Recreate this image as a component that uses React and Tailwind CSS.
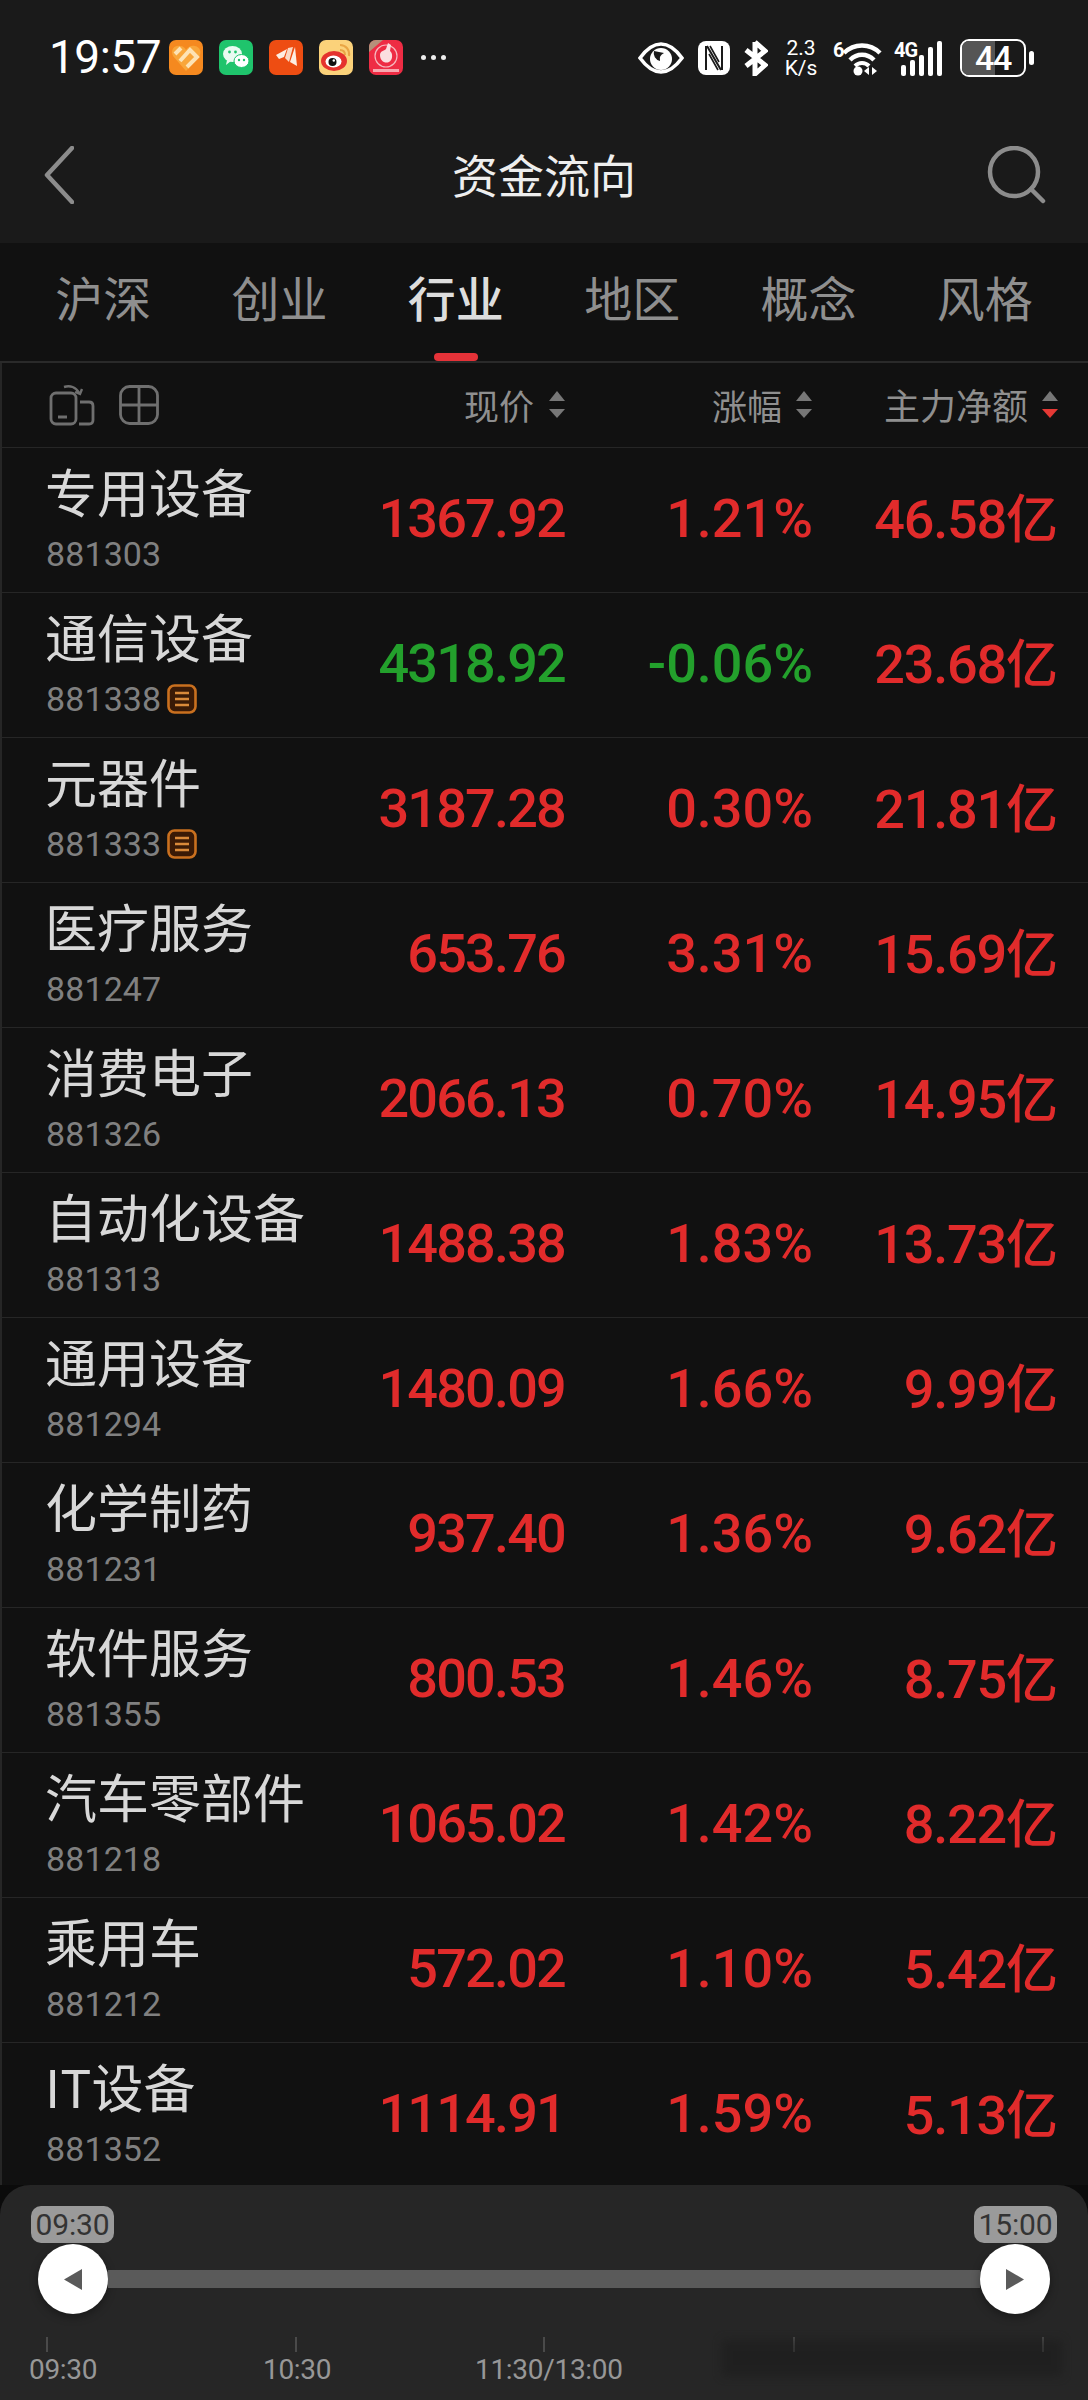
import React from "react";

const CJK = '"Noto Sans CJK SC", "Noto Sans", sans-serif';

const rows = [
  ["专用设备", "881303", "1367.92", "1.21%", "46.58亿"],
  ["通信设备", "881338", "4318.92", "-0.06%", "23.68亿", true],
  ["元器件", "881333", "3187.28", "0.30%", "21.81亿", true],
  ["医疗服务", "881247", "653.76", "3.31%", "15.69亿"],
  ["消费电子", "881326", "2066.13", "0.70%", "14.95亿"],
  ["自动化设备", "881313", "1488.38", "1.83%", "13.73亿"],
  ["通用设备", "881294", "1480.09", "1.66%", "9.99亿"],
  ["化学制药", "881231", "937.40", "1.36%", "9.62亿"],
  ["软件服务", "881355", "800.53", "1.46%", "8.75亿"],
  ["汽车零部件", "881218", "1065.02", "1.42%", "8.22亿"],
  ["乘用车", "881212", "572.02", "1.10%", "5.42亿"],
  ["IT设备", "881352", "1114.91", "1.59%", "5.13亿"],
];

function AppIcons() {
  return (
    <div className="flex items-center gap-[16px] ml-[8px]">
      <svg width="34" height="35" viewBox="0 0 34 35">
        <rect width="34" height="35" rx="7" fill="#f5891f" />
        <path d="M17 31 L4 16 C1 9 6 5 11 6 C14 6 16 8 17 10 C19 7 22 5 26 6 C31 7 33 12 30 17 Z" fill="#f9a63a" />
        <path d="M6 14 L12 8 M11 21 L21 10 L28 17 L18 27" fill="none" stroke="#fde3b5" strokeWidth="4" />
      </svg>
      <svg width="34" height="35" viewBox="0 0 34 35">
        <rect width="34" height="35" rx="7" fill="#1fc46c" />
        <ellipse cx="13.5" cy="14" rx="9.5" ry="8" fill="#e9fbf1" />
        <path d="M8 20 L7 25 L12 21 Z" fill="#e9fbf1" />
        <ellipse cx="22.5" cy="21" rx="7.5" ry="6.5" fill="#ffffff" stroke="#1fc46c" />
        <circle cx="10.5" cy="12" r="1.4" fill="#1fc46c" />
        <circle cx="16.5" cy="12" r="1.4" fill="#1fc46c" />
        <circle cx="20" cy="20" r="1.2" fill="#1fc46c" />
        <circle cx="25" cy="20" r="1.2" fill="#1fc46c" />
      </svg>
      <svg width="34" height="35" viewBox="0 0 34 35">
        <rect width="34" height="35" rx="7" fill="#ee4d12" />
        <path d="M7 15 L18 9 L15 17 L10 19 Z" fill="#fdeee2" />
        <path d="M19 8 L24 7 L20 22 L16 18 Z" fill="#fbd9c4" />
        <path d="M26 7 L28 26 L21 22 Z" fill="#fdeee2" />
      </svg>
      <svg width="34" height="35" viewBox="0 0 34 35">
        <rect width="34" height="35" rx="7" fill="#fbd27a" />
        <path d="M21 5 C27 5 31 10 30 16 M21 10 C24 10 26 12 26 15" stroke="#e9a645" strokeWidth="2" fill="none" />
        <ellipse cx="15" cy="21" rx="13" ry="10" fill="#e5322d" />
        <ellipse cx="14.5" cy="21.5" rx="8" ry="6" fill="#fff" />
        <circle cx="13.5" cy="22" r="4" fill="#111" />
        <circle cx="14.8" cy="20.5" r="1.2" fill="#fff" />
      </svg>
      <svg width="34" height="35" viewBox="0 0 34 35">
        <rect width="34" height="35" rx="7" fill="#ee2c44" />
        <path d="M0 7 C0 3 3 0 7 0 L14 0 L0 12 Z" fill="#b5907a" />
        <circle cx="17" cy="16" r="11" fill="none" stroke="#f6b8be" strokeWidth="1.2" />
        <path d="M11 15 C11 11 15 11 17 9 L19 3 L22 5 L21 11 C24 13 24 20 20 22 C16 24 11 21 11 15 Z" fill="#fbdfe0" />
        <rect x="4" y="29" width="26" height="3" fill="#f7a8b0" />
      </svg>
      <div className="flex gap-[5px] ml-[2px]">
        <span className="w-[5px] h-[5px] rounded-full bg-[#eeeeee]" />
        <span className="w-[5px] h-[5px] rounded-full bg-[#eeeeee]" />
        <span className="w-[5px] h-[5px] rounded-full bg-[#eeeeee]" />
      </div>
    </div>
  );
}

function StatusIcons() {
  return (
    <div className="flex items-center text-white" style={{ fontFamily: "Roboto, sans-serif" }}>
      <svg width="46" height="32" viewBox="0 0 46 32" className="mr-[14px]">
        <path d="M2 16 C10 5 17 2 23 2 C29 2 36 5 44 16 C36 27 29 30 23 30 C17 30 10 27 2 16 Z" fill="none" stroke="#fff" strokeWidth="3.6" />
        <circle cx="23" cy="17" r="11" fill="#fff" />
        <path d="M16 9 A8 8 0 0 0 22 19 A7 7 0 0 1 26 11 Z" fill="#1a1a1a" />
      </svg>
      <svg width="32" height="34" viewBox="0 0 32 34" className="mr-[13px]">
        <rect width="32" height="34" rx="8" fill="#fff" />
        <path d="M8 5 V29 M24 5 V29 M9 5 L23 29" fill="none" stroke="#1a1a1a" strokeWidth="2" />
        <path d="M12 5 L21 21 M11 13 L20 29" fill="none" stroke="#1a1a1a" strokeWidth="1.6" />
      </svg>
      <svg width="25" height="36" viewBox="0 0 25 36" className="mr-[16px]">
        <path d="M12 2 L12 34 L22 25 L3 10 M12 2 L22 11 L3 26" fill="none" stroke="#fff" strokeWidth="5" />
      </svg>
      <div className="flex flex-col items-center w-[34px] mr-[15px] text-[21px] leading-[20px]">
        <span>2.3</span>
        <span>K/s</span>
      </div>
      <div className="relative w-[49px] h-[36px] mr-[12px]">
        <span className="absolute left-0 top-0 text-[20px] leading-[20px] font-bold">6</span>
        <svg width="40" height="36" viewBox="0 0 40 36" className="absolute left-[9px] top-0">
          <path d="M2 13 C12 3 28 3 38 13" fill="none" stroke="#fff" strokeWidth="4.5" />
          <path d="M8 20 C15 13 25 13 32 20" fill="none" stroke="#fff" strokeWidth="4.5" />
          <path d="M13 26 C17 22 23 22 27 26" fill="none" stroke="#fff" strokeWidth="4" />
          <circle cx="16" cy="31" r="4.5" fill="#fff" />
          <path d="M27 27 L27 35 L22 31 Z M30 27 L30 35 L35 31 Z" fill="#fff" />
        </svg>
      </div>
      <div className="relative w-[51px] h-[36px] mr-[15px]">
        <span className="absolute left-0 top-0 text-[20px] leading-[20px] font-bold tracking-[-1px]">4G</span>
        <div className="absolute left-[7px] bottom-0 flex items-end gap-[4px]">
          <span className="w-[5px] h-[11px] rounded-[2px] bg-white" />
          <span className="w-[5px] h-[16px] rounded-[2px] bg-white" />
          <span className="w-[5px] h-[21px] rounded-[2px] bg-white" />
          <span className="w-[5px] h-[29px] rounded-[2px] bg-white" />
          <span className="w-[5px] h-[35px] rounded-[2px] bg-white" />
        </div>
      </div>
      <div className="relative w-[66px] h-[38px] rounded-[9px] border-[2.5px] border-white overflow-hidden flex items-center justify-center">
        <div className="absolute left-0 top-0 bottom-0 w-[33px] bg-[#555555]" />
        <span className="relative text-[34px] font-medium leading-[32px] tracking-[-1.2px]">44</span>
      </div>
      <span className="w-[5px] h-[14px] rounded-full bg-white ml-[3px]" />
    </div>
  );
}

function Sort({ active }) {
  return (
    <svg width="16" height="28" viewBox="0 0 16 28" className="shrink-0">
      <path d="M8 0 L16 10 L0 10 Z" fill="#777777" />
      <path d="M0 18 L16 18 L8 27 Z" fill={active ? "#e53935" : "#777777"} />
    </svg>
  );
}

function TagIcon() {
  return (
    <svg width="30" height="30" viewBox="0 0 30 30" className="ml-[6px]">
      <rect x="1.5" y="1.5" width="27" height="27" rx="6" fill="#3a1a06" stroke="#c9701f" strokeWidth="2.6" />
      <path d="M8 9 H22 M8 15 H22 M8 21 H22" stroke="#d98a3a" strokeWidth="2.4" />
    </svg>
  );
}

function Row({ r, last }) {
  const [name, code, price, pct, amount, tag] = r;
  const down = pct.startsWith("-");
  const base = "text-right font-medium text-[54px] leading-none mt-[-3px] ";
  return (
    <div className={"grid shrink-0 grid-cols-[300px_220px_248px_245px] items-center h-[145px] pl-[43px] pr-[30px]" + (last ? "" : " border-b border-[#262626]")}>
      <div className="flex flex-col self-start pt-[13px]">
        <div className="text-[52px] leading-[60px] text-[#d8d8d8] whitespace-nowrap" style={{ fontFamily: CJK }}>{name}</div>
        <div className="flex items-center mt-[16px] h-[34px] ml-[1px]">
          <span className="text-[34px] leading-[34px] text-[#808080] tracking-[0.1px]" style={{ fontFamily: "Roboto, sans-serif" }}>{code}</span>
          {tag && <TagIcon />}
        </div>
      </div>
      <div className={base + "tracking-[-1.8px] " + (down ? "text-[#23a02c]" : "text-[#e12b2b]")}>{price}</div>
      <div className={base + "tracking-[0px] " + (down ? "text-[#23a02c]" : "text-[#e12b2b]")}>{pct}</div>
      <div className={base + "tracking-[-1.2px] text-[#e12b2b]"}>{amount.slice(0, -1)}<span className="text-[52px] tracking-normal" style={{ fontFamily: CJK }}>亿</span></div>
    </div>
  );
}

export default function App() {
  const tabs = ["沪深", "创业", "行业", "地区", "概念", "风格"];
  return (
    <div className="w-[1088px] h-[2400px] overflow-hidden flex flex-col bg-[#111111]" style={{ fontFamily: 'Roboto, "Noto Sans CJK SC", sans-serif' }}>
      <div className="h-[243px] bg-[#1a1a1a] shrink-0 flex flex-col">
        <div className="h-[112px] flex items-start justify-between pl-[49px] pr-[54px] pt-[38px]">
          <div className="flex items-center">
            <span className="text-[46px] leading-[38px] text-white tracking-[-0.5px]">19:57</span>
            <AppIcons />
          </div>
          <StatusIcons />
        </div>
        <div className="flex-1 flex items-start justify-between pl-[44px] pr-[41px] pt-[34px] relative">
          <svg width="30" height="58" viewBox="0 0 30 58">
            <path d="M28 2 L3 29 L28 56" fill="none" stroke="#8c8c8c" strokeWidth="4.5" strokeLinecap="round" strokeLinejoin="round" />
          </svg>
          <div className="absolute left-0 right-0 top-[34px] text-center text-[46px] leading-[54px] text-[#eeeeee]" style={{ fontFamily: CJK }}>资金流向</div>
          <svg width="60" height="58" viewBox="0 0 60 58">
            <circle cx="27" cy="26" r="24" fill="none" stroke="#8c8c8c" strokeWidth="4.5" />
            <path d="M44 43 L56 55" fill="none" stroke="#8c8c8c" strokeWidth="4.5" strokeLinecap="round" />
          </svg>
        </div>
      </div>

      <div className="h-[120px] shrink-0 px-[15px] flex border-b-2 border-[#2a2a2a]">
        {tabs.map((t, i) => (
          <div key={t} className={"relative flex-1 flex justify-center pt-[19px] text-[48px] leading-[68px] " + (i === 2 ? "text-[#dddddd] font-medium" : "text-[#8f8f8f]")} style={{ fontFamily: CJK }}>
            {t}
            {i === 2 && <span className="absolute bottom-0 left-1/2 -translate-x-1/2 w-[44px] h-[8px] rounded-full bg-[#e53238]" />}
          </div>
        ))}
      </div>

      <div className="flex-1 min-h-0 overflow-hidden border-l-2 border-[#262626] bg-[#111111] flex flex-col">
        <div className="h-[85px] shrink-0 border-b border-[#262626] flex items-center pl-[47px] pr-[30px]" style={{ fontFamily: CJK }}>
          <svg width="46" height="42" viewBox="0 0 46 42" className="mr-[24px] shrink-0">
            <rect x="2" y="9" width="25" height="31" rx="5" fill="none" stroke="#6f6f6f" strokeWidth="2.8" />
            <path d="M9 33 H18" stroke="#6f6f6f" strokeWidth="3" />
            <path d="M15 3 C21 1 27 3 30 9 M26 8 L31 10 L33 5" fill="none" stroke="#6f6f6f" strokeWidth="2.4" />
            <path d="M31 18 H40 Q44 18 44 22 V36 Q44 40 40 40 H30" fill="none" stroke="#6f6f6f" strokeWidth="2.8" />
          </svg>
          <svg width="40" height="40" viewBox="0 0 40 40" className="shrink-0">
            <rect x="1.5" y="1.5" width="37" height="37" rx="9" fill="none" stroke="#6f6f6f" strokeWidth="2.8" />
            <path d="M20 2 V38 M2 20 H38" stroke="#6f6f6f" strokeWidth="2.8" />
          </svg>
          <div className="flex-1 flex items-center justify-end gap-[15px] text-[35px] leading-none text-[#8f8f8f]">
            <span className="-mt-[2px]">现价</span><Sort />
          </div>
          <div className="w-[247px] flex items-center justify-end gap-[14px] text-[35px] leading-none text-[#8f8f8f]">
            <span className="-mt-[2px]">涨幅</span><Sort />
          </div>
          <div className="w-[246px] flex items-center justify-end gap-[14px] text-[36px] leading-none text-[#8f8f8f]">
            <span className="-mt-[2px]">主力净额</span><Sort active />
          </div>
        </div>
        {rows.map((r, i) => (
          <Row key={r[1]} r={r} last={i === rows.length - 1} />
        ))}
      </div>

      <div className="h-[215px] shrink-0 bg-[#0b0b0b]">
        <div className="relative h-full bg-[#262626] rounded-t-[30px] px-[31px] pt-[21px]">
          <div className="flex justify-between">
            <Badge>09:30</Badge>
            <Badge>15:00</Badge>
          </div>
          <div className="flex items-center pl-[7px] pr-[7px] mt-[1px]">
            <Knob dir="left" />
            <div className="flex-1 h-[18px] bg-[#5a5a5a]" />
            <Knob dir="right" />
          </div>
          <div className="relative mt-[23px] h-[15px]">
            {[15, 264, 512, 762, 1011].map((x) => (
              <span key={x} className="absolute top-0 w-[2px] h-[15px] bg-[#4a4a4a]" style={{ left: x }} />
            ))}
          </div>
          <div className="flex text-[28px] leading-[26px] text-[#979797] mt-[5px] -ml-[2px] tracking-[-0.3px]">
            <span className="w-[234px]">09:30</span>
            <span className="w-[212px]">10:30</span>
            <span>11:30/13:00</span>
          </div>
          <div className="absolute left-[722px] top-[155px] w-[340px] h-[36px] bg-[#1a1a1a] opacity-50 blur-[5px]" />
        </div>
      </div>
    </div>
  );
}

function Badge({ children }) {
  return (
    <div className="w-[83px] h-[37px] rounded-[10px] bg-[#9a9a9a] text-[#333333] text-[30px] leading-[37px] text-center tracking-[-0.1px]">{children}</div>
  );
}

function Knob({ dir }) {
  return (
    <div className="w-[70px] h-[70px] rounded-full bg-white shrink-0 flex items-center justify-center shadow-[0_3px_8px_rgba(0,0,0,0.35)]">
      <svg width="18" height="21" viewBox="0 0 18 21">
        {dir === "left" ? <path d="M0 10.5 L18 0 L18 21 Z" fill="#5a5a5a" /> : <path d="M18 10.5 L0 0 L0 21 Z" fill="#5a5a5a" />}
      </svg>
    </div>
  );
}
